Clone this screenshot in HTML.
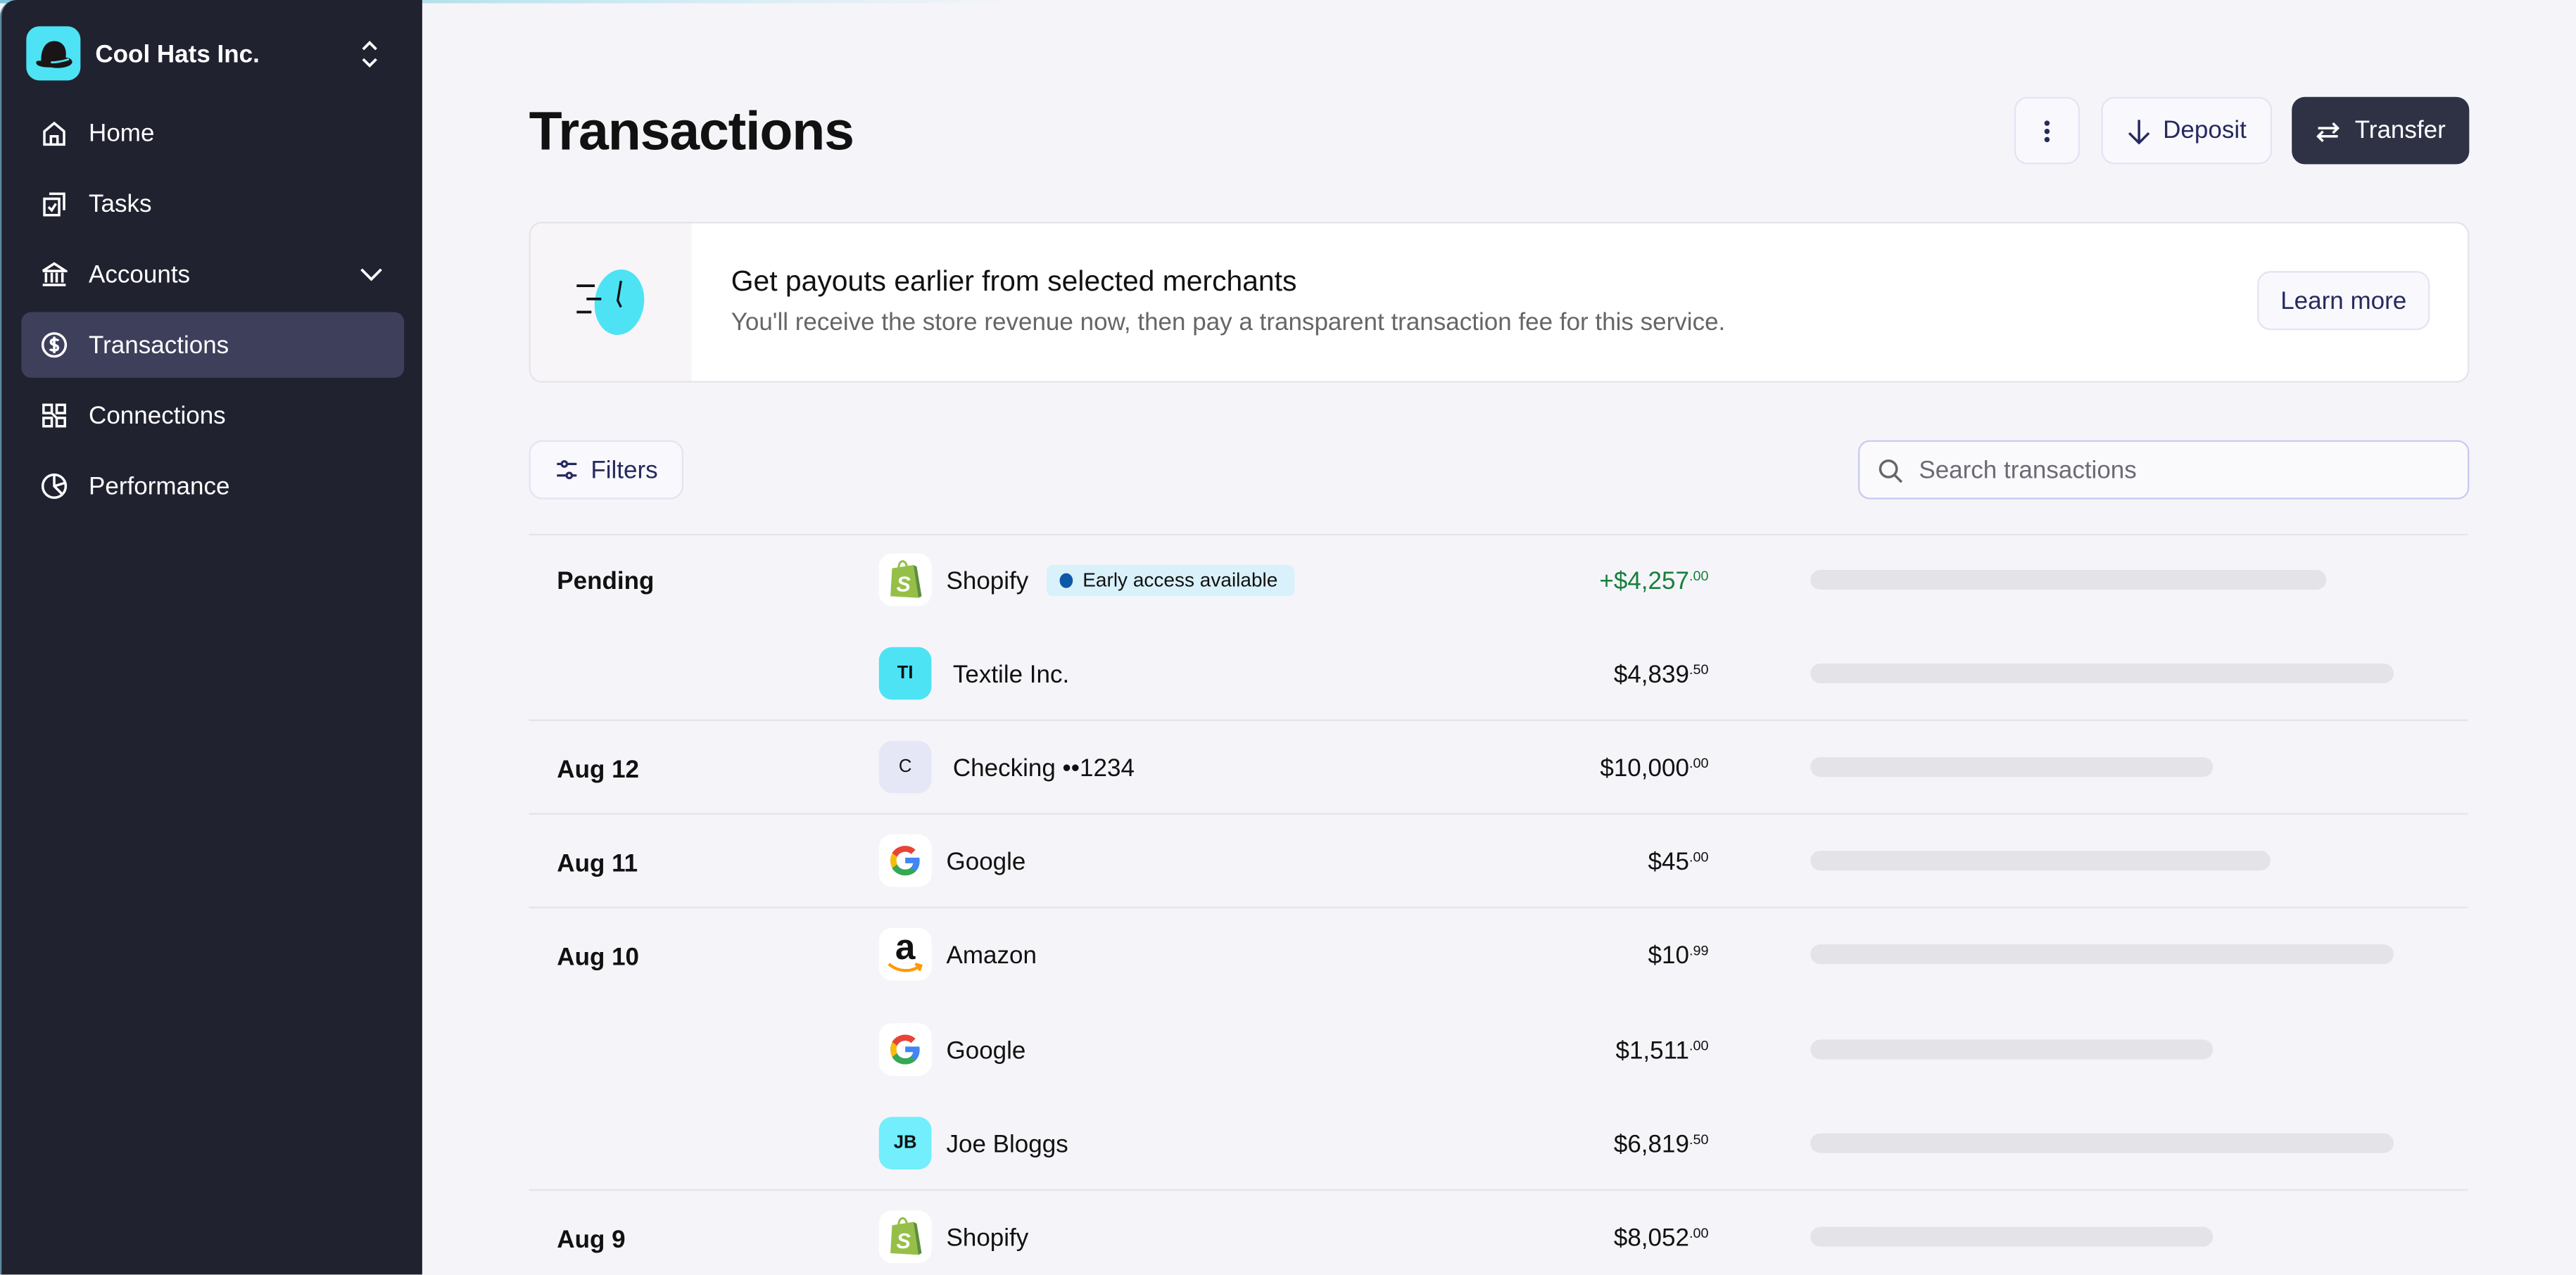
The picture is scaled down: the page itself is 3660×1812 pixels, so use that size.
<!DOCTYPE html>
<html><head><meta charset="utf-8"><style>
*{box-sizing:border-box;margin:0;padding:0}
html,body{width:3660px;height:1812px;overflow:hidden;background:#f5f5f9}
#w{position:absolute;left:0;top:0;width:1568px;height:776px;transform:scale(2.3342);transform-origin:0 0;font-family:"Liberation Sans",sans-serif;color:#111;background:#f5f5f9}
.a{position:absolute}
#sb{left:0;top:0;width:257px;height:776px;background:#20222f;border-top-left-radius:10px;border-left:1px solid #5a8aa0}
.nav{position:absolute;left:12px;width:233px;height:40px;border-radius:6px;color:#fff;font-size:15px;display:flex;align-items:center}
.nav svg{position:absolute;left:12px;top:12px}
.nav span{position:absolute;left:41px;top:12px}
.btn{position:absolute;border:1px solid #e3e4f4;background:#f9f9fd;border-radius:8px;color:#262a5e;font-size:15px;display:flex;align-items:center;justify-content:center;gap:8px}
.line{position:absolute;left:322px;width:1180px;height:1px;background:#e4e3ea}
.date{position:absolute;left:339px;font-size:15px;font-weight:bold;transform:translateY(-50%);margin-top:1px}
.ic{position:absolute;left:535px;width:32px;height:32px;border-radius:8px;background:#fff;display:flex;align-items:center;justify-content:center;font-size:11px;font-weight:bold;transform:translateY(-50%)}
.nm{position:absolute;font-size:15px;transform:translateY(-50%);margin-top:1px}
.amt{position:absolute;right:528px;font-size:15px;transform:translateY(-50%);margin-top:1px}
.amt sup{font-size:8.5px;vertical-align:5px}
.sk{position:absolute;left:1102px;height:12px;border-radius:6px;background:#e4e4e8;transform:translateY(-50%)}
</style></head><body><div id="w">
<div class="a" style="left:0;top:0;width:620px;height:2px;background:linear-gradient(90deg,#7cc4d8,#bfe6ef,rgba(245,245,249,0))"></div>
<div id="sb" class="a">
 <div class="a" style="left:15px;top:16px;width:33px;height:33px;border-radius:8px;background:#4de3f5">
  <svg width="33" height="33" viewBox="0 0 33 33"><path d="M9 21 C9 12 13 9 17 9 C22 9 25 13 24 19 C26 19 28 20 28 22 C27 25 20 26 15 25 C9 25 6 24 6 22 C6 21 7 21 9 21Z" fill="#1a1416"/><path d="M15 22 C19 22 23 21 26 20" stroke="#4de3f5" stroke-width="1.2" fill="none"/></svg>
 </div>
 <div class="a" style="left:57px;top:25px;color:#fff;font-size:15px;font-weight:bold">Cool Hats Inc.</div>
 <svg class="a" style="left:218px;top:24px" width="12" height="18" viewBox="0 0 12 18"><path d="M2 6 L6 2 L10 6 M2 12 L6 16 L10 12" stroke="#fff" stroke-width="1.6" fill="none"/></svg>
 <div class="nav" style="top:61px"><svg width="16" height="16" viewBox="0 0 16 16" fill="none" stroke="#fff" stroke-width="1.5"><path d="M2 7 L8 2 L14 7 V15 H2Z M6 15 V10 H10 V15"/></svg><span>Home</span></div>
 <div class="nav" style="top:104px"><svg width="16" height="16" viewBox="0 0 16 16" fill="none" stroke="#fff" stroke-width="1.5"><path d="M2 5 H11 V15 H2Z M5 2 H14 V12 M4.5 10 L6.5 12 L9 8"/></svg><span>Tasks</span></div>
 <div class="nav" style="top:147px"><svg width="16" height="16" viewBox="0 0 16 16" fill="none" stroke="#fff" stroke-width="1.5"><path d="M1 6 L8 1.5 L15 6 H1 M3 7 V13 M6.5 7 V13 M9.5 7 V13 M13 7 V13 M1 14.5 H15"/></svg><span>Accounts</span><svg style="left:206px;top:15px" width="14" height="10" viewBox="0 0 14 10"><path d="M1 2 L7 8 L13 2" stroke="#fff" stroke-width="1.6" fill="none"/></svg></div>
 <div class="nav" style="top:190px;background:#3e3f5b"><svg width="16" height="16" viewBox="0 0 16 16" fill="none" stroke="#fff" stroke-width="1.5"><circle cx="8" cy="8" r="7"/><path d="M10.5 5.5 C10 4.5 6 4 6 6.2 C6 8.5 10.3 7.5 10.3 9.8 C10.3 12 6 11.5 5.5 10.5 M8 3 V13"/></svg><span>Transactions</span></div>
 <div class="nav" style="top:233px"><svg width="16" height="16" viewBox="0 0 16 16" fill="none" stroke="#fff" stroke-width="1.5"><path d="M1.5 1.5 H6.5 V6.5 H1.5Z M9.5 1.5 H14.5 V6.5 H9.5Z M1.5 9.5 H6.5 V14.5 H1.5Z M9.5 9.5 H14.5 V14.5 H9.5Z M6.5 6.5 L9.5 9.5"/></svg><span>Connections</span></div>
 <div class="nav" style="top:276px"><svg width="16" height="16" viewBox="0 0 16 16" fill="none" stroke="#fff" stroke-width="1.5"><circle cx="8" cy="8" r="7"/><path d="M8 1 V8 L13 13 M8 8 L14.5 6"/></svg><span>Performance</span></div>
</div>

<div class="a" style="left:322px;top:61px;font-size:33px;font-weight:bold;letter-spacing:-0.5px">Transactions</div>
<div class="btn" style="left:1226px;top:59px;width:40px;height:41px"><svg width="4" height="16"><circle cx="2" cy="3" r="1.6" fill="#262a5e"/><circle cx="2" cy="8" r="1.6" fill="#262a5e"/><circle cx="2" cy="13" r="1.6" fill="#262a5e"/></svg></div>
<div class="btn" style="left:1279px;top:59px;width:104px;height:41px"><svg width="14" height="16" viewBox="0 0 14 16"><path d="M7 1 V15 M1 9 L7 15 L13 9" stroke="#262a5e" stroke-width="1.5" fill="none"/></svg>Deposit</div>
<div class="btn" style="left:1395px;top:59px;width:108px;height:41px;background:#2f3245;border-color:#2f3245;color:#fff"><svg width="16" height="16" viewBox="0 0 16 16" fill="none" stroke="#fff" stroke-width="1.5"><path d="M2 6 H14 M11 3 L14 6 L11 9 M14 11 H2 M5 8 L2 11 L5 14"/></svg>Transfer</div>

<div class="a" style="left:322px;top:135px;width:1181px;height:98px;background:#fff;border:1px solid #e6e4ea;border-radius:8px;overflow:hidden">
 <div class="a" style="left:0;top:0;width:98px;height:98px;background:#f7f5f8"></div>
 <svg class="a" style="left:24px;top:26px" width="50" height="46" viewBox="0 0 50 46"><ellipse cx="30" cy="22" rx="15" ry="20" fill="#4de3f5" transform="rotate(8 30 22)"/><path d="M4 12 H15 M10 20 H19 M4 28 H13" stroke="#111" stroke-width="1.6"/><path d="M31 9 L29 21 L31 25" stroke="#111" stroke-width="1.4" fill="none"/></svg>
 <div class="a" style="left:122px;top:25px;font-size:17.5px">Get payouts earlier from selected merchants</div>
 <div class="a" style="left:122px;top:52px;font-size:15px;color:#666">You'll receive the store revenue now, then pay a transparent transaction fee for this service.</div>
 <div class="btn" style="left:1051px;top:29px;width:105px;height:36px">Learn more</div>
</div>

<div class="btn" style="left:322px;top:268px;width:94px;height:36px"><svg width="14" height="14" viewBox="0 0 14 14" fill="none" stroke="#262a5e" stroke-width="1.4"><path d="M1 3.5 H4 M7 3.5 H13 M1 10.5 H7 M10 10.5 H13"/><circle cx="5.5" cy="3.5" r="1.6"/><circle cx="8.5" cy="10.5" r="1.6"/></svg>Filters</div>
<div class="a" style="left:1131px;top:268px;width:372px;height:36px;border:1px solid #c9caf0;border-radius:7px;background:#fafafd">
 <svg class="a" style="left:11px;top:10px" width="16" height="16" viewBox="0 0 16 16" fill="none" stroke="#666" stroke-width="1.5"><circle cx="6.5" cy="6.5" r="5"/><path d="M10.5 10.5 L14.5 14.5"/></svg>
 <div class="a" style="left:36px;top:9px;font-size:15px;color:#6b6b75">Search transactions</div>
</div>

<div class="line" style="top:325px"></div><div class="line" style="top:438px"></div><div class="line" style="top:495px"></div><div class="line" style="top:552px"></div><div class="line" style="top:724px"></div>

<div class="date" style="top:353px">Pending</div>
<div class="date" style="top:468px">Aug 12</div>
<div class="date" style="top:525px">Aug 11</div>
<div class="date" style="top:582px">Aug 10</div>
<div class="date" style="top:754px">Aug 9</div>

<div class="ic" style="top:353px"><svg width="22" height="26" viewBox="0 0 22 26"><path d="M3 6 L16 4 L19 24 L2 23Z" fill="#95bf47"/><path d="M16 4 L19 24 L21 23 L18 5Z" fill="#5e8e3e"/><path d="M7 6 C7 1 11 0 12 5" stroke="#95bf47" stroke-width="1.3" fill="none"/><text x="10" y="20" font-size="13" font-weight="bold" fill="#fff" text-anchor="middle" font-family="Liberation Sans" font-style="italic">S</text></svg></div>
<div class="nm" style="left:576px;top:353px">Shopify</div>
<div class="a" style="left:637px;top:344px;width:151px;height:19px;background:#d9f1fa;border-radius:4px;font-size:12px;padding-left:22px;line-height:19px">Early access available<span class="a" style="left:8px;top:5px;width:8px;height:9px;border-radius:50%;background:#0d58a7"></span></div>
<div class="amt" style="top:353px;color:#16803c">+$4,257<sup>.00</sup></div>
<div class="sk" style="top:353px;width:314px"></div>

<div class="ic" style="top:410px;background:#4de3f5">TI</div>
<div class="nm" style="left:580px;top:410px">Textile Inc.</div>
<div class="amt" style="top:410px">$4,839<sup>.50</sup></div>
<div class="sk" style="top:410px;width:355px"></div>

<div class="ic" style="top:467px;background:#e6e7f6;font-weight:normal">C</div>
<div class="nm" style="left:580px;top:467px">Checking ••1234</div>
<div class="amt" style="top:467px">$10,000<sup>.00</sup></div>
<div class="sk" style="top:467px;width:245px"></div>

<div class="ic" style="top:524px"><svg width="20" height="20" viewBox="0 0 20 20"><path d="M10 8.2 H18.6 C18.8 9 18.8 9.6 18.8 10.2 C18.8 15.4 15.2 19 10 19 C5 19 1 15 1 10 C1 5 5 1 10 1 C12.4 1 14.6 1.9 16.2 3.4 L13.6 6 C12.7 5.1 11.4 4.6 10 4.6 C7 4.6 4.6 7 4.6 10 C4.6 13 7 15.4 10 15.4 C12.6 15.4 14.3 13.9 14.8 11.6 H10Z" fill="#4285f4"/><path d="M2 5.4 L5 7.6 C5.8 5.8 7.7 4.6 10 4.6 C11.4 4.6 12.7 5.1 13.6 6 L16.2 3.4 C14.6 1.9 12.4 1 10 1 C6.5 1 3.5 2.8 2 5.4Z" fill="#ea4335"/><path d="M1 10 C1 8.4 1.4 6.8 2 5.4 L5 7.6 C4.7 8.4 4.6 9.2 4.6 10 C4.6 10.8 4.8 11.6 5 12.4 L2 14.6 C1.4 13.2 1 11.6 1 10Z" fill="#fbbc05"/><path d="M2 14.6 L5 12.4 C5.8 14.2 7.7 15.4 10 15.4 C11.4 15.4 12.6 15 13.5 14.2 L16.4 16.5 C14.8 18.1 12.5 19 10 19 C6.5 19 3.5 17.2 2 14.6Z" fill="#34a853"/></svg></div>
<div class="nm" style="left:576px;top:524px">Google</div>
<div class="amt" style="top:524px">$45<sup>.00</sup></div>
<div class="sk" style="top:524px;width:280px"></div>

<div class="ic" style="top:581px"><svg width="26" height="28" viewBox="0 0 26 28"><text x="13" y="17" font-size="22" font-weight="bold" text-anchor="middle" font-family="Liberation Sans" fill="#111">a</text><path d="M3 20 C9 25 17 25 22 21 M19 20 L22.5 21 L21.5 24" stroke="#f90" stroke-width="1.8" fill="none"/></svg></div>
<div class="nm" style="left:576px;top:581px">Amazon</div>
<div class="amt" style="top:581px">$10<sup>.99</sup></div>
<div class="sk" style="top:581px;width:355px"></div>

<div class="ic" style="top:639px"><svg width="20" height="20" viewBox="0 0 20 20"><path d="M10 8.2 H18.6 C18.8 9 18.8 9.6 18.8 10.2 C18.8 15.4 15.2 19 10 19 C5 19 1 15 1 10 C1 5 5 1 10 1 C12.4 1 14.6 1.9 16.2 3.4 L13.6 6 C12.7 5.1 11.4 4.6 10 4.6 C7 4.6 4.6 7 4.6 10 C4.6 13 7 15.4 10 15.4 C12.6 15.4 14.3 13.9 14.8 11.6 H10Z" fill="#4285f4"/><path d="M2 5.4 L5 7.6 C5.8 5.8 7.7 4.6 10 4.6 C11.4 4.6 12.7 5.1 13.6 6 L16.2 3.4 C14.6 1.9 12.4 1 10 1 C6.5 1 3.5 2.8 2 5.4Z" fill="#ea4335"/><path d="M1 10 C1 8.4 1.4 6.8 2 5.4 L5 7.6 C4.7 8.4 4.6 9.2 4.6 10 C4.6 10.8 4.8 11.6 5 12.4 L2 14.6 C1.4 13.2 1 11.6 1 10Z" fill="#fbbc05"/><path d="M2 14.6 L5 12.4 C5.8 14.2 7.7 15.4 10 15.4 C11.4 15.4 12.6 15 13.5 14.2 L16.4 16.5 C14.8 18.1 12.5 19 10 19 C6.5 19 3.5 17.2 2 14.6Z" fill="#34a853"/></svg></div>
<div class="nm" style="left:576px;top:639px">Google</div>
<div class="amt" style="top:639px">$1,511<sup>.00</sup></div>
<div class="sk" style="top:639px;width:245px"></div>

<div class="ic" style="top:696px;background:#72eefc">JB</div>
<div class="nm" style="left:576px;top:696px">Joe Bloggs</div>
<div class="amt" style="top:696px">$6,819<sup>.50</sup></div>
<div class="sk" style="top:696px;width:355px"></div>

<div class="ic" style="top:753px"><svg width="22" height="26" viewBox="0 0 22 26"><path d="M3 6 L16 4 L19 24 L2 23Z" fill="#95bf47"/><path d="M16 4 L19 24 L21 23 L18 5Z" fill="#5e8e3e"/><path d="M7 6 C7 1 11 0 12 5" stroke="#95bf47" stroke-width="1.3" fill="none"/><text x="10" y="20" font-size="13" font-weight="bold" fill="#fff" text-anchor="middle" font-family="Liberation Sans" font-style="italic">S</text></svg></div>
<div class="nm" style="left:576px;top:753px">Shopify</div>
<div class="amt" style="top:753px">$8,052<sup>.00</sup></div>
<div class="sk" style="top:753px;width:245px"></div>
</div></body></html>
